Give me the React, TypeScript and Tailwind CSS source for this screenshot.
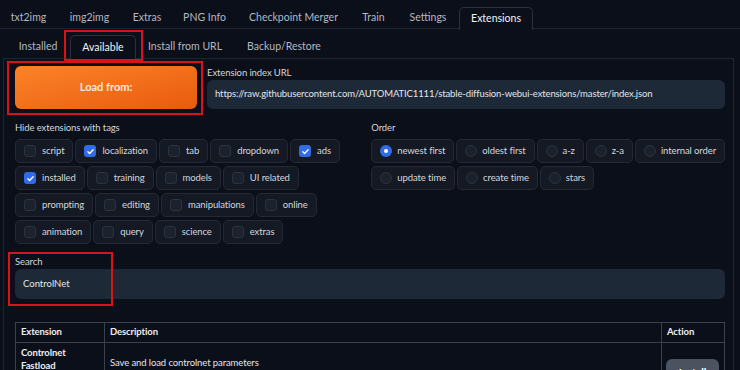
import React from 'react';

const topTabs: [string, number][] = [
  ['txt2img', 57],
  ['img2img', 65],
  ['Extras', 50],
  ['PNG Info', 65],
  ['Checkpoint Merger', 113],
  ['Train', 47],
  ['Settings', 62],
  ['Extensions', 74],
];

const subTabs: [string, number][] = [
  ['Installed', 64],
  ['Available', 66],
  ['Install from URL', 98],
  ['Backup/Restore', 100],
];

const tagRows: [string, boolean][][] = [
  [['script', false], ['localization', true], ['tab', false], ['dropdown', false], ['ads', true]],
  [['installed', true], ['training', false], ['models', false], ['UI related', false]],
  [['prompting', false], ['editing', false], ['manipulations', false], ['online', false]],
  [['animation', false], ['query', false], ['science', false], ['extras', false]],
];

const orderRows: string[][] = [
  ['newest first', 'oldest first', 'a-z', 'z-a', 'internal order'],
  ['update time', 'create time', 'stars'],
];

function CheckChip({ label, on }: { label: string; on: boolean }) {
  return (
    <div className="shrink-0 whitespace-nowrap flex items-center h-[24px] pl-[8px] pr-[8px] gap-[6px] rounded-[5px] border border-[#232936] bg-[#141924]">
      <span
        className={
          'w-[12px] h-[12px] rounded-[3px] flex items-center justify-center ' +
          (on ? 'bg-[#2f6bea]' : 'bg-[#1c222d] border border-[#2b3240]')
        }
      >
        {on && (
          <svg width="9" height="9" viewBox="0 0 12 12">
            <path d="M2.5 6.3l2.3 2.3 4.7-5" fill="none" stroke="white" strokeWidth="1.8" strokeLinecap="round" strokeLinejoin="round" />
          </svg>
        )}
      </span>
      <span className="text-[9.5px] tracking-[-0.1px] text-[#d4d7dd]">{label}</span>
    </div>
  );
}

function RadioChip({ label, on }: { label: string; on: boolean }) {
  return (
    <div className="shrink-0 whitespace-nowrap flex items-center h-[24px] pl-[8px] pr-[8px] gap-[5px] rounded-[5px] border border-[#232936] bg-[#141924]">
      <span
        className={
          'w-[12px] h-[12px] rounded-full flex items-center justify-center ' +
          (on ? 'bg-[#2f6bea]' : 'bg-[#1c222d] border border-[#2b3240]')
        }
      >
        {on && <span className="w-[4px] h-[4px] rounded-full bg-white" />}
      </span>
      <span className="text-[9.5px] tracking-[-0.1px] text-[#d4d7dd]">{label}</span>
    </div>
  );
}

export default function App() {
  return (
    <div className="relative w-[740px] h-[370px] overflow-hidden bg-[#0b0f19] font-['Lato',sans-serif] text-[#d1d5db]">
      {/* main tabs */}
      <div className="flex h-[29px] pt-[6px] border-b border-[#1f2530]">
        {topTabs.map(([t, w]) => {
          const active = t === 'Extensions';
          return (
            <div
              key={t}
              style={{ width: w }}
              className={
                'h-[23px] flex items-center justify-center text-[10.5px] ' +
                (active
                  ? 'border border-b-0 border-[#2a303c] rounded-t-[5px] bg-[#0b0f19] text-[#f3f4f6] relative top-[1px]'
                  : 'text-[#b3b8c2]')
              }
            >
              {t}
            </div>
          );
        })}
      </div>

      {/* sub tabs */}
      <div className="flex pl-[6px] pt-[6px] h-[29px]">
        {subTabs.map(([t, w]) => {
          const active = t === 'Available';
          return (
            <div
              key={t}
              style={{ width: w }}
              className={
                'flex items-center justify-center text-[10.5px] ' +
                (active
                  ? 'h-[24px] border border-b-0 border-[#2a303c] rounded-t-[5px] bg-[#0b0f19] text-[#f3f4f6] relative z-10'
                  : 'h-[23px] text-[#b3b8c2]')
              }
            >
              {t}
            </div>
          );
        })}
      </div>

      {/* panel */}
      <div className="ml-[3px] w-[731px] h-[400px] border border-[#1f2530] pl-[11px] pr-[8px] pt-[7px]">
        <div className="flex gap-[10px]">
          <div className="w-[182px] h-[43px] rounded-[6px] bg-gradient-to-br from-[#fb8328] to-[#e95a0c] flex items-center justify-center text-[11px] font-bold text-[#fde9dc]">
            Load from:
          </div>
          <div className="flex-1 flex flex-col">
            <div className="h-[14px] text-[9.5px] tracking-[-0.1px] text-[#d4d7dd] leading-[14px]">Extension index URL</div>
            <div className="h-[29px] rounded-[6px] bg-[#1e2937] flex items-center pl-[8px] text-[9.5px] tracking-[-0.12px] text-[#e2e5ea] whitespace-nowrap overflow-hidden">
              https://raw.githubusercontent.com/AUTOMATIC1111/stable-diffusion-webui-extensions/master/index.json
            </div>
          </div>
        </div>

        <div className="flex mt-[12px]">
          <div className="w-[361px]">
            <div className="h-[14px] leading-[14px] text-[9.5px] tracking-[-0.1px] text-[#d4d7dd] mb-[4px]">Hide extensions with tags</div>
            <div className="flex flex-col gap-[3px]">
              {tagRows.map((row, i) => (
                <div key={i} className="flex gap-[2px]">
                  {row.map(([l, on]) => (
                    <CheckChip key={l} label={l} on={on} />
                  ))}
                </div>
              ))}
            </div>
          </div>
          <div className="flex-1">
            <div className="h-[14px] leading-[14px] text-[9.5px] tracking-[-0.1px] text-[#d4d7dd] mb-[4px]">Order</div>
            <div className="flex flex-col gap-[3px]">
              {orderRows.map((row, i) => (
                <div key={i} className="flex gap-[2px]">
                  {row.map((l) => (
                    <RadioChip key={l} label={l} on={l === 'newest first'} />
                  ))}
                </div>
              ))}
            </div>
          </div>
        </div>

        <div className="mt-[11px]">
          <div className="h-[14px] leading-[14px] text-[9.5px] tracking-[-0.1px] text-[#d4d7dd]">Search</div>
          <div className="h-[30px] rounded-[6px] bg-[#1e2937] flex items-center pl-[8px] text-[9.5px] text-[#e2e5ea]">
            ControlNet
          </div>
        </div>

        <table className="mt-[23px] w-full border-collapse text-[9.5px] tracking-[-0.1px]">
          <thead>
            <tr className="h-[20px]">
              <th className="w-[89px] border border-[#3b404b] text-left font-bold px-[5px] text-[#eceef1]">Extension</th>
              <th className="border border-[#3b404b] text-left font-bold px-[5px] text-[#eceef1]">Description</th>
              <th className="w-[63px] border border-[#3b404b] text-left font-bold px-[5px] text-[#eceef1]">Action</th>
            </tr>
          </thead>
          <tbody>
            <tr className="h-[52px]">
              <td className="border border-[#3b404b] align-top pt-[3px] px-[5px] font-bold text-[#eceef1] leading-[13px]">
                Controlnet
                <br />
                Fastload
              </td>
              <td className="border border-[#3b404b] align-top pt-[13px] px-[5px] text-[#e2e5ea]">
                Save and load controlnet parameters
              </td>
              <td className="border border-[#3b404b] align-top pt-[16px] px-[4px]">
                <div className="w-[53px] h-[30px] rounded-[6px] bg-[#4b5361] flex items-center justify-center font-bold text-white text-[10.5px]">
                  Install
                </div>
              </td>
            </tr>
          </tbody>
        </table>
      </div>

      {/* annotation boxes */}
      <div className="absolute left-[64px] top-[30px] w-[79px] h-[31px] border-2 border-[#d8121c] pointer-events-none z-20" />
      <div className="absolute left-[7px] top-[61px] w-[196px] h-[54px] border-2 border-[#d8121c] pointer-events-none z-20" />
      <div className="absolute left-[8px] top-[252px] w-[105px] h-[54px] border-2 border-[#d8121c] pointer-events-none z-20" />
    </div>
  );
}
